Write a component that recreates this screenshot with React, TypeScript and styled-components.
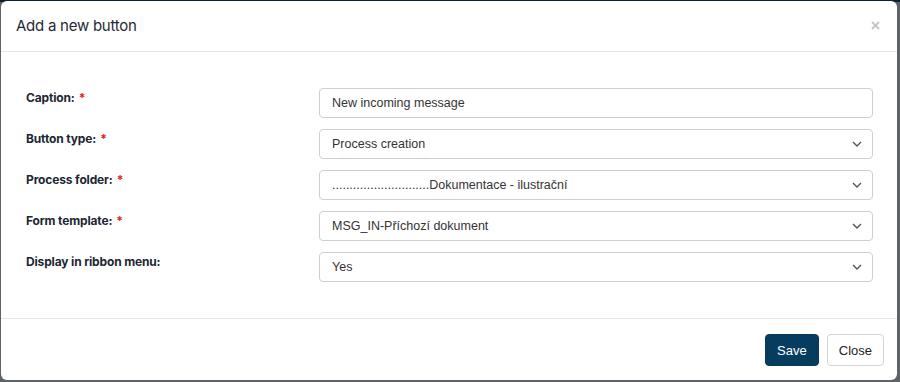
import React from 'react'
import styled, { createGlobalStyle } from 'styled-components'

const GlobalStyle = createGlobalStyle`
	html, body {
		margin: 0;
		padding: 0;
		height: 100%;
	}
	body {
		background: #5f6366;
		font-family: Inter, "Noto Sans", sans-serif;
	}
`

const Backdrop = styled.div`
	width: 900px;
	height: 382px;
	box-sizing: border-box;
	padding: 1px 3px 2px 1px;
	background: linear-gradient(#0b2233 0 2px, #5f6366 2px);
	display: flex;
`

const Dialog = styled.div`
	flex: 1;
	background: #fff;
	border-radius: 6px;
	display: flex;
	flex-direction: column;
	overflow: hidden;
`

const Header = styled.div`
	height: 51px;
	flex-shrink: 0;
	box-sizing: border-box;
	border-bottom: 1px solid #e5e5e5;
	display: flex;
	align-items: center;
	justify-content: space-between;
	padding: 0 15px 2px 15px;
`

const Title = styled.h4`
	margin: 0;
	font-size: 15px;
	font-weight: 400;
	color: #1f2a33;
	letter-spacing: -0.25px;
`

const CloseX = styled.button`
	border: 0;
	background: none;
	padding: 0;
	width: 14px;
	height: 14px;
	display: flex;
	align-items: center;
	justify-content: center;
	cursor: pointer;
`

const Body = styled.div`
	flex: 1;
	padding: 36px 24px 0 25px;
	display: flex;
	flex-direction: column;
	gap: 11px;
	border-bottom: 1px solid #e5e5e5;
`

const Row = styled.div`
	display: grid;
	grid-template-columns: 293px 1fr;
	align-items: start;
`

const Label = styled.label`
	font-size: 12px;
	font-weight: 700;
	color: #1c2733;
	padding-top: 2px;
	letter-spacing: -0.15px;
`

const Required = styled.span`
	color: #e0201b;
	margin-left: 4px;
`

const Field = styled.div`
	height: 30px;
	box-sizing: border-box;
	border: 1px solid #cfcfcf;
	border-radius: 4px;
	display: flex;
	align-items: center;
	justify-content: space-between;
	padding: 0 10px 0 12px;
	font-family: "Liberation Sans", Arial, sans-serif;
	font-size: 12.5px;
	color: #333;
`

const Footer = styled.div`
	display: flex;
	justify-content: flex-end;
	gap: 8px;
	padding: 15px 13px 14px 0;
`

const Button = styled.button<{ $primary?: boolean }>`
	height: 32px;
	box-sizing: border-box;
	padding: 0 11px;
	border-radius: 4px;
	font-family: "Liberation Sans", Arial, sans-serif;
	font-size: 13px;
	cursor: pointer;
	border: 1px solid ${p => (p.$primary ? '#063a5a' : '#d4d4d4')};
	background: ${p => (p.$primary ? '#063d5f' : '#fff')};
	color: ${p => (p.$primary ? '#fff' : '#222')};
`

const Chevron = () => (
	<svg width="10" height="6" viewBox="0 0 10 6">
		<path d="M1 1l4 4 4-4" fill="none" stroke="#555" strokeWidth="1.4" />
	</svg>
)

const fields = [
	{ label: 'Caption:', value: 'New incoming message', required: true, select: false },
	{ label: 'Button type:', value: 'Process creation', required: true, select: true },
	{ label: 'Process folder:', value: '............................Dokumentace - ilustrační', required: true, select: true },
	{ label: 'Form template:', value: 'MSG_IN-Příchozí dokument', required: true, select: true },
	{ label: 'Display in ribbon menu:', value: 'Yes', required: false, select: true },
]

export default function App() {
	return (
		<>
			<GlobalStyle />
			<Backdrop>
				<Dialog>
					<Header>
						<Title>Add a new button</Title>
						<CloseX aria-label='Close'>
							<svg width="9" height="9" viewBox="0 0 9 9">
								<path d="M1 1l7 7M8 1l-7 7" stroke="#c4c4c4" strokeWidth="1.8" />
							</svg>
						</CloseX>
					</Header>
					<Body>
						{fields.map(f => (
							<Row key={f.label}>
								<Label>
									{f.label}
									{f.required && <Required>*</Required>}
								</Label>
								<Field>
									<span>{f.value}</span>
									{f.select && <Chevron />}
								</Field>
							</Row>
						))}
					</Body>
					<Footer>
						<Button $primary>Save</Button>
						<Button>Close</Button>
					</Footer>
				</Dialog>
			</Backdrop>
		</>
	)
}
